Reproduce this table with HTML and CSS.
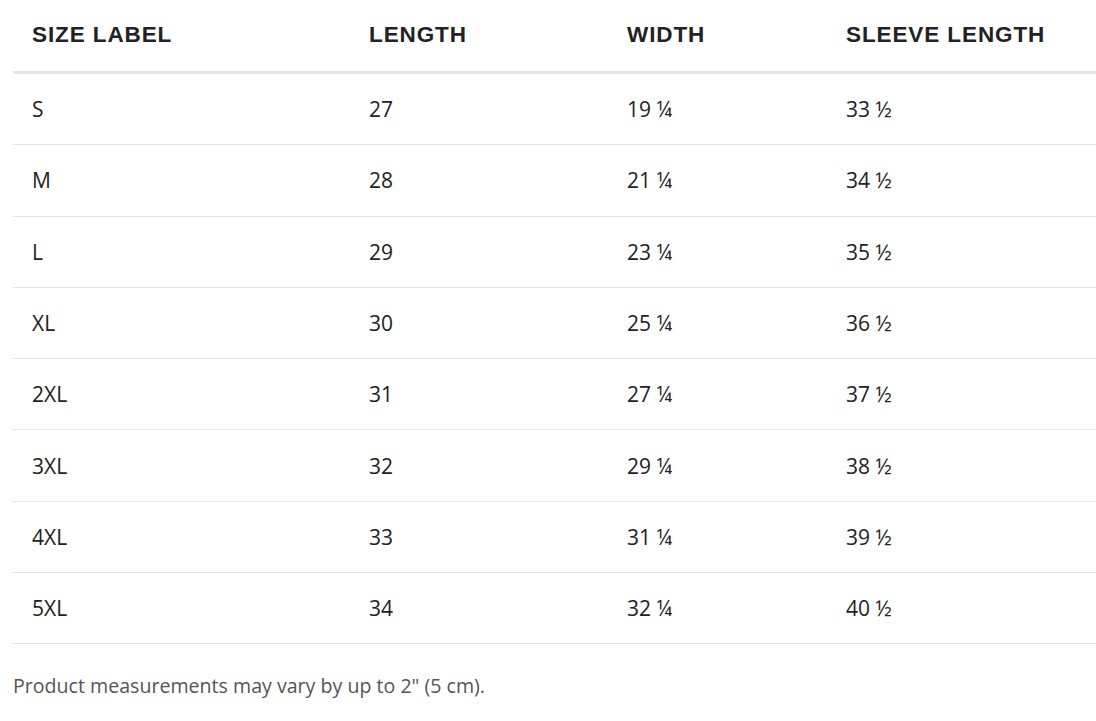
FILE: index.html
```html
<!DOCTYPE html>
<html>
<head>
<meta charset="utf-8">
<link rel="stylesheet" href="styles.css">
</head>
<body>
<div class="wrap">
  <table class="sizes">
    <colgroup>
      <col class="c1"><col class="c2"><col class="c3"><col class="c4">
    </colgroup>
    <thead>
      <tr><th>SIZE LABEL</th><th>LENGTH</th><th>WIDTH</th><th>SLEEVE LENGTH</th></tr>
    </thead>
    <tbody>
      <tr><td>S</td><td>27</td><td>19 ¼</td><td>33 ½</td></tr>
      <tr><td>M</td><td>28</td><td>21 ¼</td><td>34 ½</td></tr>
      <tr><td>L</td><td>29</td><td>23 ¼</td><td>35 ½</td></tr>
      <tr><td>XL</td><td>30</td><td>25 ¼</td><td>36 ½</td></tr>
      <tr><td>2XL</td><td>31</td><td>27 ¼</td><td>37 ½</td></tr>
      <tr><td>3XL</td><td>32</td><td>29 ¼</td><td>38 ½</td></tr>
      <tr><td>4XL</td><td>33</td><td>31 ¼</td><td>39 ½</td></tr>
      <tr><td>5XL</td><td>34</td><td>32 ¼</td><td>40 ½</td></tr>
    </tbody>
  </table>
  <p class="note">Product measurements may vary by up to 2" (5 cm).</p>
</div>
</body>
</html>
```
FILE: styles.css
```css
html, body {
  margin: 0;
  padding: 0;
  background: #ffffff;
  overflow: hidden;
}
.wrap {
  padding-left: 13px;
  width: 1100px;
}
.sizes {
  border-collapse: collapse;
  table-layout: fixed;
  width: 1087px;
  font-family: "Open Sans", "Liberation Sans", sans-serif;
  color: #222222;
}
.c1 { width: 337px; }
.c2 { width: 258px; }
.c3 { width: 219px; }
.c4 { width: 273px; }
.sizes th {
  font-family: "Liberation Sans", Arial, sans-serif;
  font-weight: bold;
  font-size: 22.5px;
  letter-spacing: 0.9px;
  text-align: left;
  padding: 0 0 2px 19px;
  height: 69px;
  border-bottom: 3px solid #e5e5e5;
  color: #222222;
}
.sizes td {
  font-size: 21px;
  text-align: left;
  padding: 0 0 0 19px;
  height: 70.3px;
  border-bottom: 1px solid #e5e5e5;
}
.note {
  margin: 28px 0 0 0;
  font-family: "Open Sans", "Liberation Sans", sans-serif;
  font-size: 19.6px;
  color: #555555;
}
```
